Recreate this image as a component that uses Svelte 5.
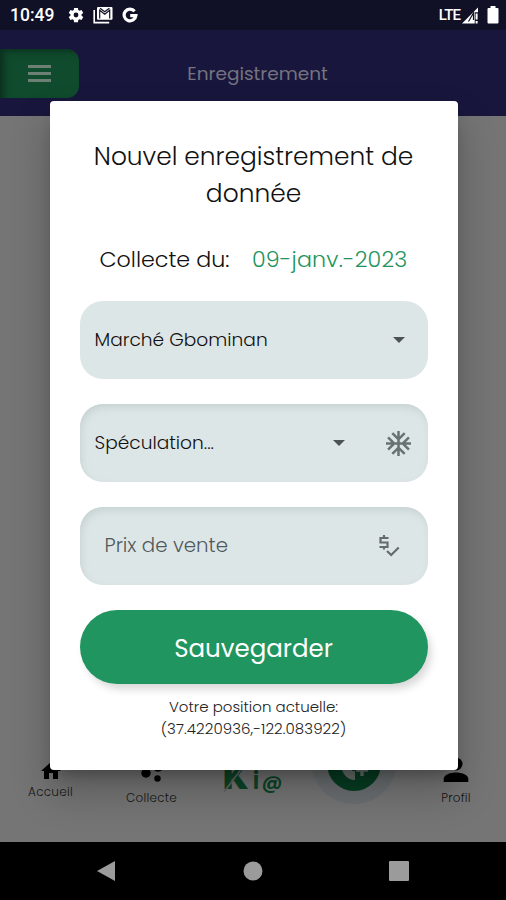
<script>
  let title = "Nouvel enregistrement de donnée";
  let date = "09-janv.-2023";
  let market = "Marché Gbominan";
  let speculation = "Spéculation...";
  let price = "";
  let position = "(37.4220936,-122.083922)";
</script>

<div class="screen">
  <!-- status bar -->
  <div class="status">
    <span class="time">10:49</span>
    <svg class="gear" width="18" height="18" viewBox="0 0 24 24">
      <path
        fill="#fff"
        d="M19.4 13a7.500 7.500 0 0 0 0-2l2.300-1.700-2.300-4-2.700 1.100-1.700-1L14.600 2.500H9.400L9 5.400l-1.700 1-2.700-1.100-2.300 4L4.600 11a7.500 7.500 0 0 0 0 2l-2.300 1.700 2.300 4 2.700-1.100 1.700 1 .4 2.900h5.200l.4-2.900 1.700-1 2.700 1.100 2.300-4zM12 15.200a3.200 3.200 0 1 1 0-6.400 3.200 3.200 0 0 1 0 6.400z"
      />
    </svg>
    <svg class="mail" width="20" height="18" viewBox="0 0 20 18">
      <path d="M1.200 4v12.600h15" fill="none" stroke="#fff" stroke-width="1.600" />
      <rect x="4" y="1" width="15.500" height="12.800" rx="1" fill="#fff" />
      <path
        d="M6.700 12.500V4.200l5 4 5-4v8.300M7 2.200l4.700 3.600 4.700-3.600"
        fill="none"
        stroke="#101026"
        stroke-width="1.200"
      />
    </svg>
    <svg class="google" width="16" height="16" viewBox="0 0 16 16">
      <path
        d="M12.600 4.200A5.900 5.900 0 1 0 13.900 8.600H8.200"
        fill="none"
        stroke="#fff"
        stroke-width="3.200"
      />
    </svg>
    <span class="lte">LTE</span>
    <svg width="17" height="17" viewBox="0 0 17 17">
      <path d="M0 16.500L16 .5v4.800h-3.300v11.200z" fill="#fff" />
      <path d="M6.500 14.500L11.500 6v7" fill="none" stroke="#101026" stroke-width="1.200" />
      <path d="M14.600 6.500v6M14.600 14v2.400" stroke="#fff" stroke-width="2" />
    </svg>
    <svg class="battery" width="12" height="18" viewBox="0 0 12 18">
      <path d="M3.500 0h5v2H10.500q1 0 1 1v13.500q0 1-1 1h-9q-1 0-1-1V3q0-1 1-1h2z" fill="#fff" />
    </svg>
  </div>

  <header>
    <button class="menu" aria-label="Menu">
      <span></span>
      <span></span>
      <span></span>
    </button>
    <h1>Enregistrement</h1>
  </header>

  <main></main>

  <!-- bottom tabs -->
  <footer>
    <div class="tab home">
      <svg width="24" height="24" viewBox="0 0 24 24">
        <path d="M10 20v-6h4v6h5v-8h3L12 3 2 12h3v8z" />
      </svg>
      <span>Accueil</span>
    </div>
    <div class="tab collect">
      <svg width="24" height="24" viewBox="0 0 24 24">
        <circle cx="6" cy="14" r="4.700" />
        <circle cx="17.500" cy="19.500" r="3.200" />
        <circle cx="18" cy="7" r="5.700" />
      </svg>
      <span>Collecte</span>
    </div>
    <div class="logo">
      <span class="k">K</span><span class="i">i</span><span class="at">@</span>
      <svg class="slash" width="30" height="34" viewBox="0 0 30 34">
        <path d="M1 32L22 4" stroke="#646464" stroke-width="1.800" />
      </svg>
    </div>
    <div class="add">
      <svg width="54" height="54" viewBox="0 0 54 54">
        <circle cx="27" cy="27" r="27" fill="#063d22" />
        <path d="M15 25a14 14 0 0 0 13 18v-9h-3v-14z" fill="#69716e" />
        <path d="M35 26v14M28 33h14" stroke="#063d22" stroke-width="7" />
        <path d="M35 27v12M29 33h12" stroke="#69716e" stroke-width="3.400" />
      </svg>
    </div>
    <div class="tab profile">
      <svg width="26" height="26" viewBox="0 0 26 26">
        <circle cx="13" cy="7" r="6.500" />
        <path d="M.7 25v-3C.7 17.500 8 15.500 13 15.500s12.300 2 12.300 6.500v3z" />
      </svg>
      <span>Profil</span>
    </div>
  </footer>

  <nav>
    <svg width="18" height="20" viewBox="0 0 18 20"><path d="M18 0v20L0 10z" /></svg>
    <svg width="20" height="20" viewBox="0 0 20 20"><circle cx="10" cy="10" r="9.500" /></svg>
    <svg width="20" height="20" viewBox="0 0 20 20"><rect width="20" height="20" rx="1" /></svg>
  </nav>

  <!-- dialog -->
  <div class="dialog">
    <h2>{title}</h2>
    <div class="date">
      <span>Collecte du:</span>
      <span class="green">{date}</span>
    </div>

    <div class="field flat">
      <span class="value">{market}</span>
      <svg class="caret" width="12" height="6" viewBox="0 0 12 6"><path d="M0 0h12L6 6z" /></svg>
    </div>

    <div class="field">
      <span class="value">{speculation}</span>
      <svg class="caret" width="12" height="6" viewBox="0 0 12 6"><path d="M0 0h12L6 6z" /></svg>
      <svg class="flake" width="25" height="25" viewBox="2 2 20 20">
        <path
          d="M22 11h-4.170l3.240-3.240-1.410-1.420L15 11h-2V9l4.660-4.660-1.420-1.410L13 6.170V2h-2v4.170L7.760 2.930 6.340 4.340 11 9v2H9L4.340 6.340 2.930 7.760 6.170 11H2v2h4.170l-3.240 3.240 1.410 1.420L9 13h2v2l-4.660 4.660 1.420 1.410L11 17.830V22h2v-4.170l3.240 3.240 1.420-1.410L13 15v-2h2l4.660 4.660 1.410-1.420L17.830 13H22z"
        />
      </svg>
    </div>

    <div class="field price">
      <input placeholder="Prix de vente" bind:value={price} />
      <svg class="dollar" width="21" height="23" viewBox="0 0 21 23">
        <path d="M9.500 4H1.500v4.500h7V13H.5M5 1v3M5 13v2.500" />
        <path d="M8 17l4.200 4 7.500-7.500" />
      </svg>
    </div>

    <button class="save">Sauvegarder</button>
    <p>
      <span>Votre position actuelle:</span>
      <span class="coords">{position}</span>
    </p>
  </div>
</div>

<style>
  :global(body) {
    margin: 0;
  }

  .screen {
    position: relative;
    display: flex;
    flex-direction: column;
    width: 506px;
    height: 900px;
    overflow: hidden;
    background: #757575;
    font-family: Poppins, Inter, "Open Sans", sans-serif;
    font-weight: 300;
    color: #111;
  }

  .status {
    display: flex;
    align-items: center;
    height: 30px;
    padding: 0 7px 0 10px;
    box-sizing: border-box;
    background: #101026;
    color: #fff;
    font-family: Roboto, sans-serif;
  }

  .time {
    width: 57px;
    font-size: 17.500px;
    font-weight: 500;
    line-height: 32px;
  }

  .mail {
    margin-left: 8px;
  }

  .google {
    margin-left: 9px;
  }

  .lte {
    margin-left: auto;
    margin-right: 2px;
    font-size: 15px;
    font-weight: 500;
    letter-spacing: -0.9px;
  }

  .battery {
    margin-left: 8px;
  }

  header {
    display: grid;
    grid-template-columns: 79px 1fr 70px;
    align-items: center;
    height: 86px;
    background: #18163c;
  }

  .menu {
    display: flex;
    flex-direction: column;
    align-items: center;
    justify-content: center;
    gap: 4px;
    width: 79px;
    height: 49px;
    padding: 0;
    border: 0;
    border-radius: 0 12px 12px 0;
    background: #104b2d;
    box-shadow: inset 6px 4px 7px -2px #0a301f;
  }

  .menu span {
    width: 23px;
    height: 3px;
    background: #6d8075;
  }

  h1 {
    margin: 0;
    text-align: center;
    font-size: 18.500px;
    font-weight: 400;
    color: #74737f;
  }

  main {
    flex: 1;
  }

  footer {
    display: grid;
    grid-template-columns: 101px 101px 101px 101px 102px;
    align-items: start;
    height: 92px;
    font-size: 12px;
    color: #161616;
  }

  .tab {
    display: flex;
    flex-direction: column;
    align-items: center;
    padding-top: 10px;
  }

  .tab span {
    line-height: 18px;
    letter-spacing: 0.25px;
  }

  .home {
    padding-top: 9px;
  }

  .collect {
    padding-top: 9px;
  }

  .collect span {
    margin-top: 6px;
  }

  .profile {
    padding-top: 7px;
    padding-left: 2px;
  }

  .profile span {
    margin-top: 6px;
  }

  .logo {
    position: relative;
    display: flex;
    align-items: baseline;
    justify-content: center;
    padding-top: 5px;
    font-weight: 600;
    color: #0b4528;
    line-height: 44px;
  }

  .k {
    font-size: 36px;
    font-weight: 800;
  }

  .i {
    margin: 0 2px 0 4px;
    font-size: 25px;
  }

  .at {
    font-size: 20px;
  }

  .slash {
    position: absolute;
    left: 21px;
    top: 10px;
  }

  .add {
    display: flex;
    align-items: center;
    justify-content: center;
    justify-self: center;
    width: 86px;
    height: 86px;
    margin-top: -32px;
    padding-top: 6px;
    box-sizing: border-box;
    border-radius: 50%;
    background: #6b6f71;
  }

  nav {
    display: flex;
    align-items: center;
    justify-content: space-between;
    height: 58px;
    padding: 0 97px;
    background: #000;
    fill: #9b9b9b;
  }

  nav svg:nth-child(2) {
    margin-left: 2px;
  }

  .dialog {
    position: absolute;
    left: 50px;
    top: 101px;
    display: flex;
    flex-direction: column;
    width: 407.500px;
    height: 669px;
    padding: 37px 30px 0 29.500px;
    box-sizing: border-box;
    border-radius: 4px;
    background: #fff;
    box-shadow: 0 11px 15px -7px rgba(0, 0, 0, 0.3), 0 22px 38px 3px rgba(0, 0, 0, 0.2);
  }

  h2 {
    margin: 0 -10px;
    text-align: center;
    font-size: 24.900px;
    font-weight: 300;
    line-height: 37px;
  }

  .date {
    display: flex;
    justify-content: space-between;
    margin: 31px 20px 24px 20px;
    font-size: 22.200px;
    line-height: 34px;
  }

  .green {
    color: #1f945e;
    letter-spacing: 0.2px;
  }

  .field {
    display: flex;
    align-items: center;
    flex: none;
    height: 78px;
    margin-bottom: 25px;
    padding: 0 17px 0 15px;
    box-sizing: border-box;
    border-radius: 23px;
    background: #dde6e7;
    box-shadow: inset 2px 4px 8px -1px #c4d0d0;
    font-size: 18.600px;
  }

  .flat {
    padding-right: 23px;
    box-shadow: none;
  }

  .price {
    padding: 0 28px 0 25px;
  }

  .value {
    flex: 1;
    padding-bottom: 2px;
  }

  input {
    flex: 1;
    min-width: 0;
    padding: 0 0 3px;
    border: 0;
    outline: 0;
    background: none;
    font: inherit;
    font-size: 19.800px;
  }

  input::placeholder {
    color: #50595c;
    opacity: 1;
  }

  .caret {
    fill: #4c5354;
  }

  .flake {
    margin-left: 41px;
    fill: #687174;
  }

  .dollar {
    margin-bottom: 2px;
    fill: none;
    stroke: #646c6e;
    stroke-width: 2.200;
  }

  .save {
    flex: none;
    height: 74px;
    padding: 2px 0 0;
    border: 0;
    border-radius: 37px;
    background: #20955f;
    box-shadow: 4px 6px 9px -1px rgba(0, 0, 0, 0.16);
    color: #fff;
    font: 400 24.500px Poppins, Inter, sans-serif;
  }

  p {
    display: flex;
    flex-direction: column;
    align-items: center;
    margin: 12px 0 0;
    font-size: 15px;
    line-height: 22px;
    color: #222;
  }

  .coords {
    letter-spacing: 0.07px;
  }
</style>
